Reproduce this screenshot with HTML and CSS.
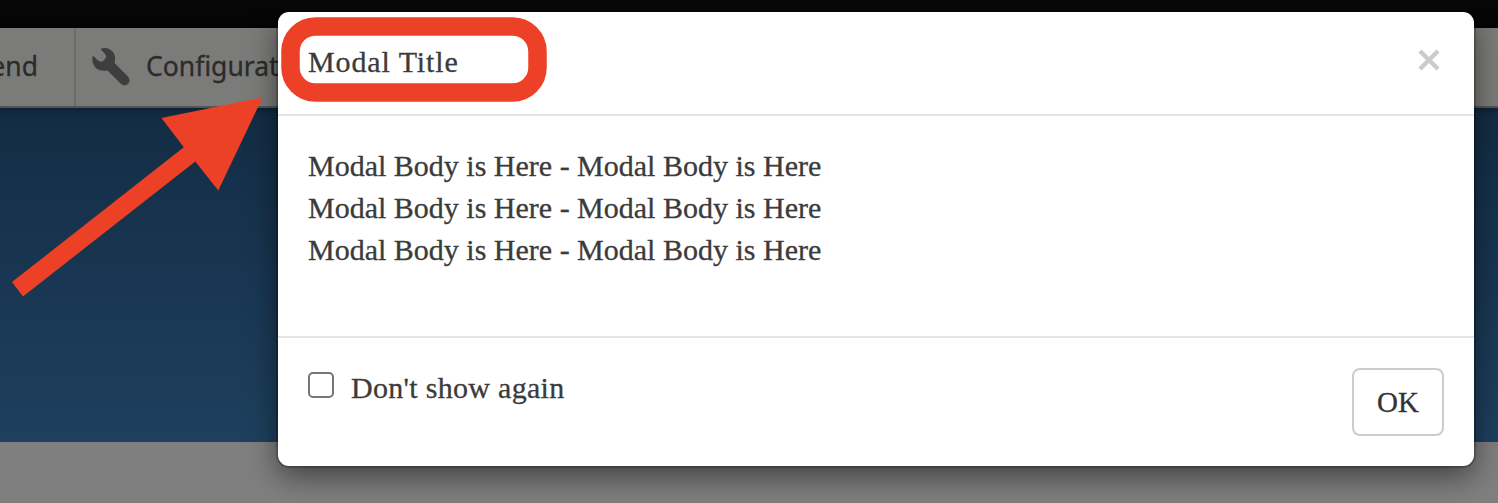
FILE: index.html
```html
<!DOCTYPE html>
<html lang="en">
<head>
<meta charset="utf-8">
<title>Modal</title>
<link rel="stylesheet" href="styles.css">
</head>
<body>
<div class="page">
  <div class="topbar"></div>
  <nav class="toolbar">
    <div class="tab tab-first"><span class="tab-text">Extend</span></div>
    <div class="tab">
      <svg class="wrench" width="38" height="38" viewBox="0 0 38 38"><path d="M1 7.500L6 12.500Q8.500 14.500 11 13L13 11Q15 8.500 13 6L8.500 1Q13-1 18 1.500Q24 5 23 12L22.500 15L36 28.500Q39 32 36.500 35.500Q33 39 29 36L15.500 22.500Q7 24 2.500 18.500Q-1 13.500 1 7.500Z"/></svg>
      <span class="tab-text">Configuration</span>
    </div>
  </nav>
  <div class="hero"></div>
  <div class="content"></div>
</div>
<section class="modal">
  <header class="modal-header">
    <h1 class="modal-title">Modal Title</h1>
    <svg class="close" width="22" height="22" viewBox="0 0 22 22"><path d="M2 2L20 20M20 2L2 20"/></svg>
  </header>
  <div class="modal-body">
    <p class="line">Modal Body is Here - Modal Body is Here</p>
    <p class="line">Modal Body is Here - Modal Body is Here</p>
    <p class="line">Modal Body is Here - Modal Body is Here</p>
  </div>
  <footer class="modal-footer">
    <label class="option"><input class="check" type="checkbox"><span class="option-text">Don't show again</span></label>
    <button class="ok" type="button">OK</button>
  </footer>
</section>
<svg class="annotation" width="1498" height="503" viewBox="0 0 1498 503">
  <rect x="290.500" y="26.500" width="247" height="66" rx="25" fill="none" stroke="#ec4127" stroke-width="18.500"/>
  <path d="M262.500 97.500L218.300 190.500L195.300 161.500L23 296.500L12 282L183.800 147.300L161.500 118Z" fill="#ec4127"/>
</svg>
</body>
</html>
```

FILE: styles.css
```css
* { box-sizing: border-box; }
body {
  margin: 0;
  width: 1498px;
  height: 503px;
  overflow: hidden;
  position: relative;
  font-family: "Liberation Serif", serif;
  font-size: 30px;
  color: #3b3b3b;
}
.page { display: flex; flex-direction: column; height: 503px; }
.topbar { height: 28px; background: #060606; }
.toolbar {
  position: relative;
  display: flex;
  height: 80px;
  background: #7b7b79;
  border-bottom: 2px solid #545452;
  box-shadow: 0 1px 8px rgba(0, 0, 0, .4);
  font-family: "Noto Sans", sans-serif;
  font-size: 26.500px;
  color: #2b2b2b;
}
.tab { display: flex; align-items: center; padding-left: 16px; }
.tab-first {
  width: 76px;
  padding: 0 36px 0 0;
  justify-content: flex-end;
  border-right: 2px solid #6d6d6b;
}
.tab-text { line-height: 76px; padding-bottom: 2px; -webkit-text-stroke: .3px currentColor; }
.wrench { flex: none; margin-right: 16px; fill: #3e3e3e; }
.hero { height: 334px; background: linear-gradient(#132c45, #1e405e); }
.content { flex: 1; background: #7f7f7f; }
.modal {
  position: absolute;
  left: 278px;
  top: 12px;
  width: 1196px;
  height: 454px;
  display: flex;
  flex-direction: column;
  background: #fff;
  border-radius: 11px;
  box-shadow: 0 0 0 2px rgba(0, 0, 0, .2), 0 10px 30px rgba(0, 0, 0, .5);
  clip-path: inset(0 -60px -60px -60px);
}
.modal-header {
  display: flex;
  justify-content: space-between;
  height: 104px;
  padding: 29px 34px 0 30px;
  border-bottom: 2px solid #e5e5e5;
}
.modal-title { margin: 0; font-size: 30px; font-weight: 400; line-height: 42px; letter-spacing: .9px; }
.close { margin-top: 8px; fill: none; stroke: #cbcbcb; stroke-width: 4.500; }
.modal-body { height: 220px; padding: 29px 30px; }
.line { margin: 0; line-height: 42px; }
.modal-footer {
  display: flex;
  justify-content: space-between;
  align-items: flex-start;
  height: 130px;
  padding: 30px;
  border-top: 2px solid #e5e5e5;
}
.option { display: flex; align-items: flex-start; gap: 17px; }
.check {
  appearance: none;
  width: 26px;
  height: 26px;
  margin: 4px 0 0;
  border: 2px solid #767676;
  border-radius: 5px;
  background: #fff;
}
.option-text { line-height: 40px; letter-spacing: .3px; }
.ok {
  width: 92px;
  height: 68px;
  padding: 0;
  border: 2px solid #ccc;
  border-radius: 8px;
  background: #fff;
  font-family: "Liberation Serif", serif;
  font-size: 29px;
  color: #333;
}
.modal-title, .line, .option-text, .ok { -webkit-text-stroke: .3px currentColor; }
.annotation { position: absolute; left: 0; top: 0; }
```
